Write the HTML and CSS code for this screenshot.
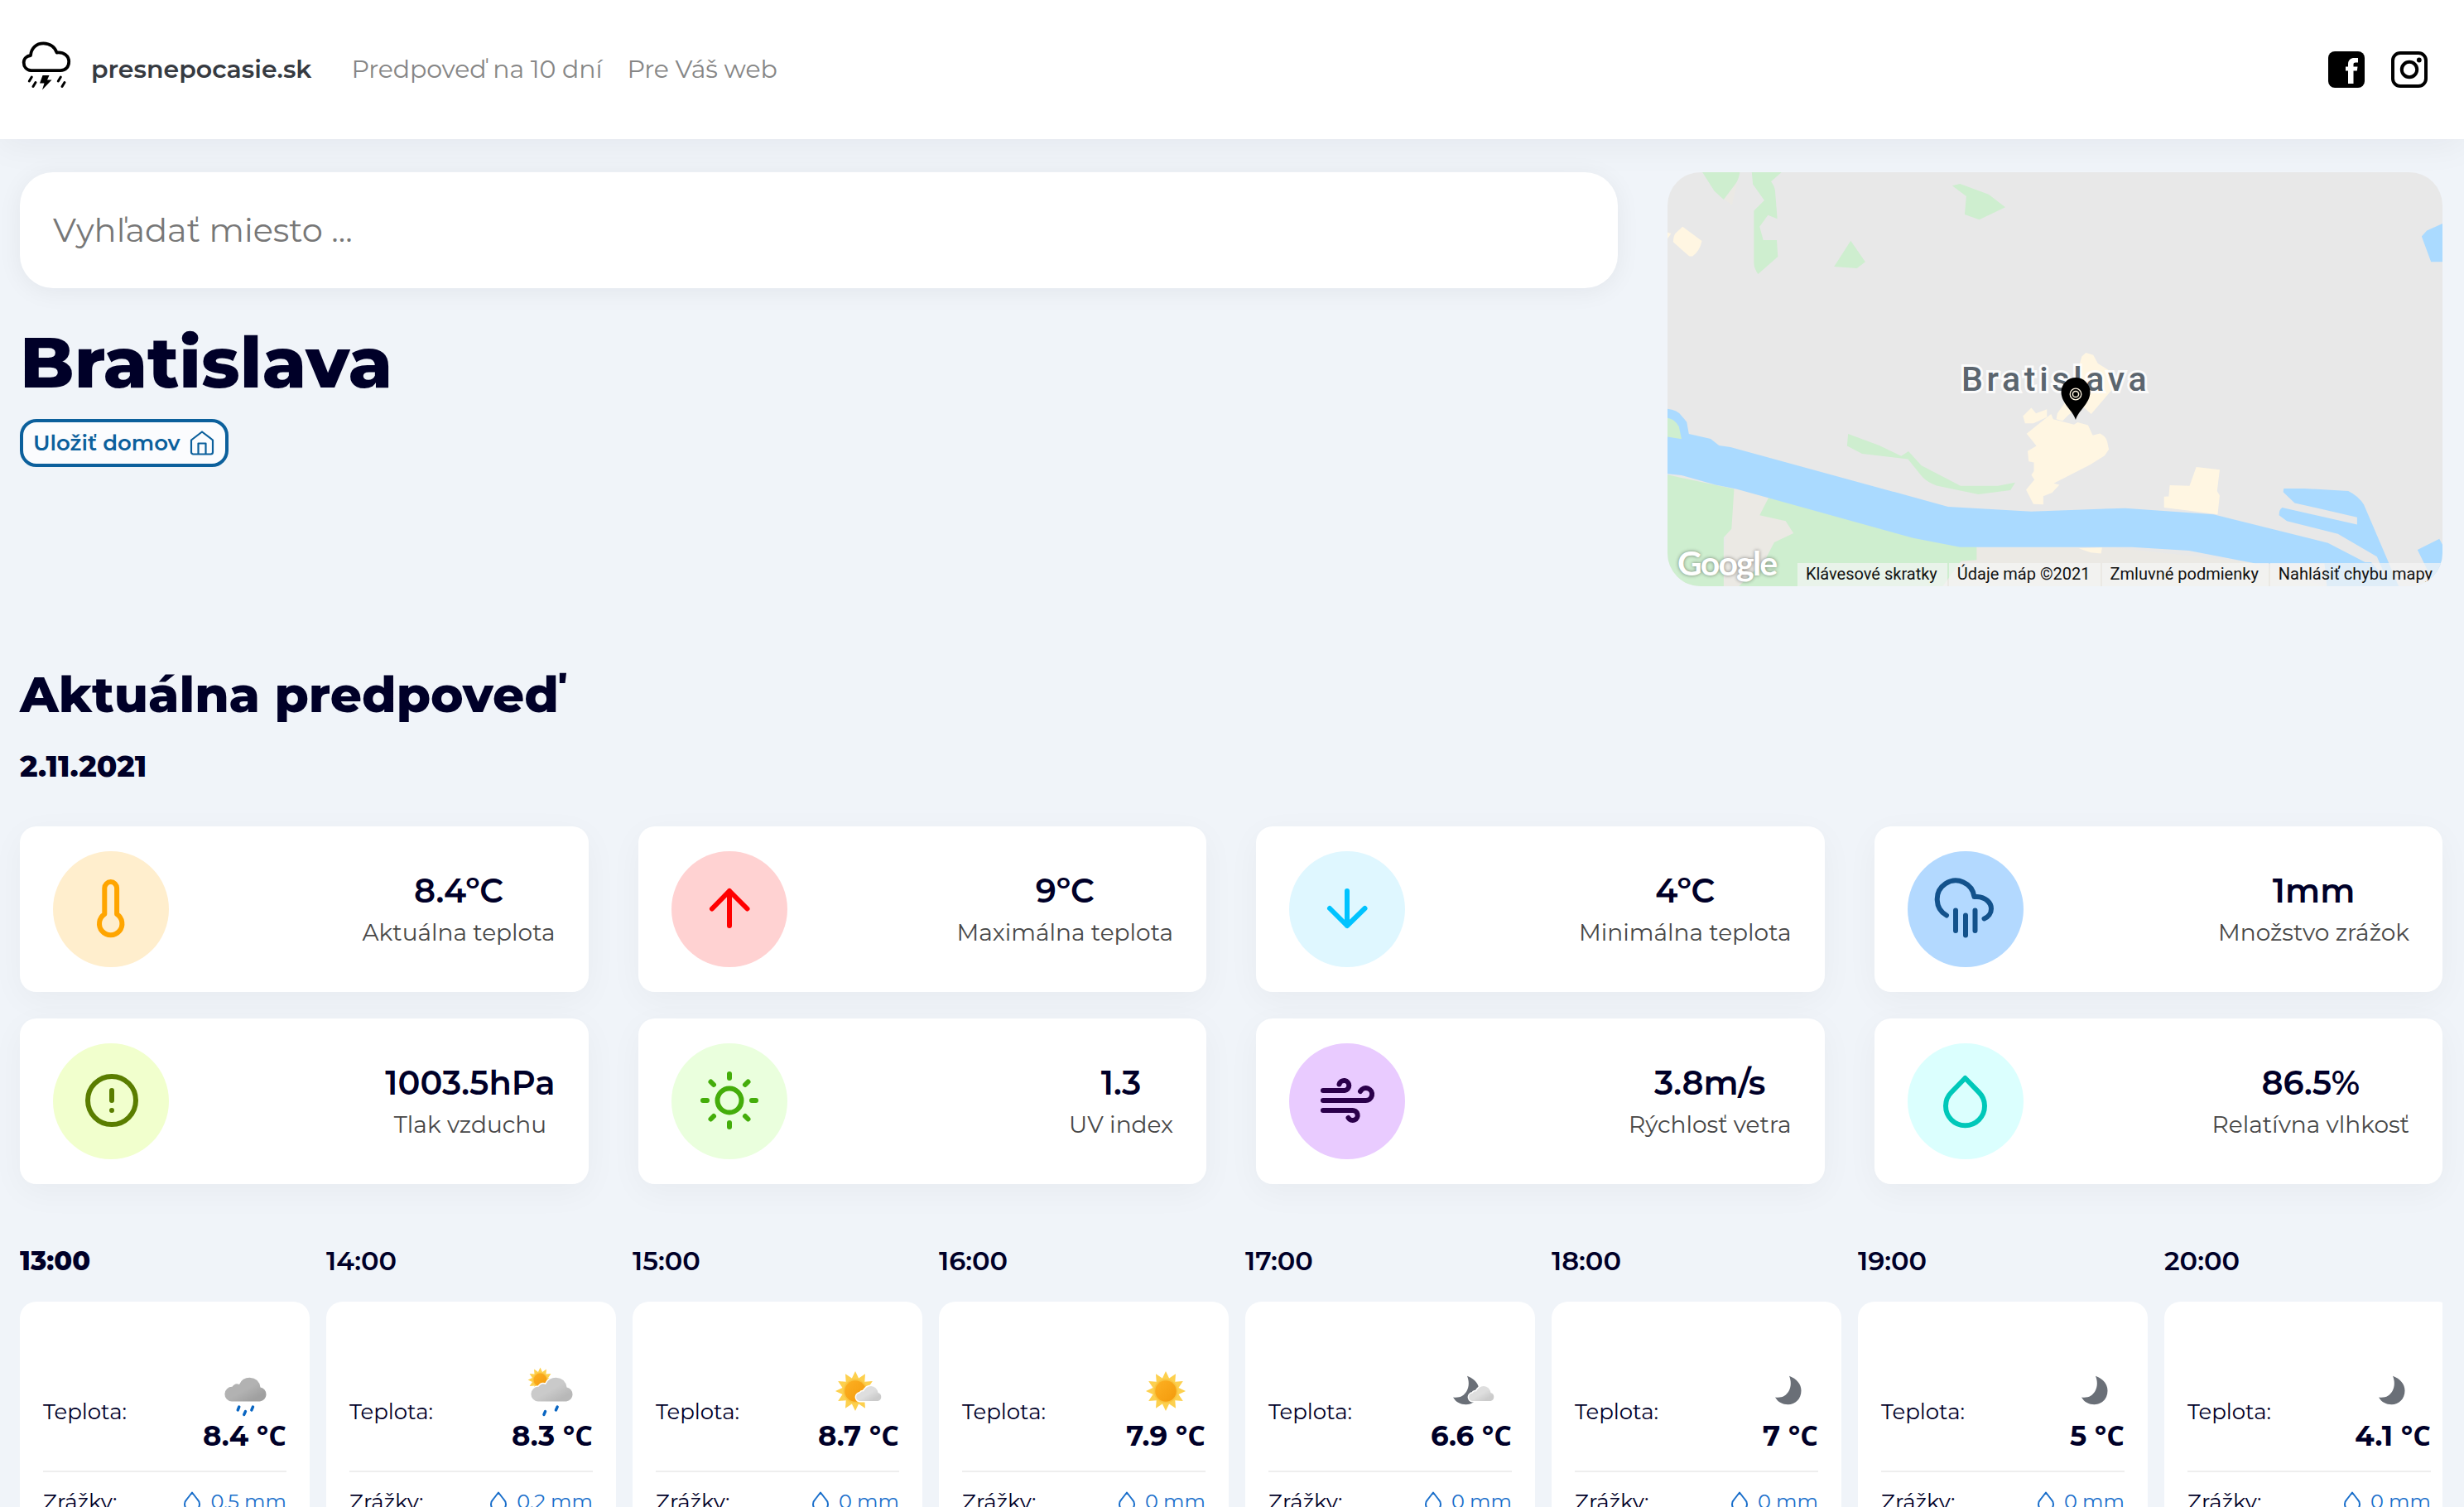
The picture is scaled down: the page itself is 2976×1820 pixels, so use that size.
FILE: index.html
```html
<!DOCTYPE html>
<html lang="sk">
<head>
<meta charset="utf-8">
<title>presnepocasie.sk</title>
<link rel="stylesheet" href="styles.css">
</head>
<body>
<svg class="defs" width="0" height="0" aria-hidden="true">
  <defs>
    <linearGradient id="g-dark" x1="0" y1="0" x2="1" y2="1"><stop offset=".5" stop-color="#b2b2b2"/><stop offset=".8" stop-color="#a0a0a0"/></linearGradient>
    <linearGradient id="g-mid" x1="0" y1="0" x2="1" y2="1"><stop offset=".5" stop-color="#cacaca"/><stop offset=".8" stop-color="#b8b8b8"/></linearGradient>
    <linearGradient id="g-light" x1="0" y1="0" x2="1" y2="1"><stop offset=".5" stop-color="#dedede"/><stop offset=".8" stop-color="#cbcbcb"/></linearGradient>
    <linearGradient id="g-sun" x1="0" y1="0" x2="1" y2="1"><stop offset="0" stop-color="#fdb022"/><stop offset="1" stop-color="#f39a0c"/></linearGradient>
    <path id="cloud" d="M20 52.500A8.800 8.800 0 0 1 20.500 34.800Q24 29.500 29 32Q32.500 23.800 41.500 23.800Q53 24.500 54.500 35.500A8.600 8.600 0 0 1 54 52.500Z"/>
    <path id="small-cloud" d="M38 52A4.800 4.800 0 0 1 38.500 42.500Q40.500 39.500 43 40.500Q46 34 52 34Q59 34.500 60.500 42A5.200 5.200 0 0 1 60.500 52Z"/>
    <path id="moon" d="M51 21.700C60 25 65.500 31.500 65.500 39.500C65.500 49.500 58.500 56.200 49.500 56.200C43 56.200 37.500 53.500 34 47.500C42 48.500 47 46 50.500 40C53.500 34.500 53.500 28 51 21.700Z"/>
    <g id="sun">
      <path fill="#fdd04e" d="M0-24L4.100-15.500L12-20.800L11.300-11.300L20.800-12L15.500-4.100L24 0L15.500 4.100L20.800 12L11.300 11.300L12 20.800L4.100 15.500L0 24L-4.100 15.500L-12 20.800L-11.300 11.300L-20.800 12L-15.500 4.100L-24 0L-15.500-4.100L-20.800-12L-11.300-11.300L-12-20.800L-4.100-15.500Z"/>
      <circle r="14.500" fill="#f9c440"/><circle r="12.800" fill="url(#g-sun)"/>
    </g>
    <path id="drop" d="M12 2.500L5.800 10.500A9 9 0 0 0 3 16.500a9 9 0 0 0 18 0A9 9 0 0 0 18.200 10.500Z"/>
    <symbol id="w-rain" viewBox="0 0 80 74"><use href="#cloud" fill="url(#g-dark)"/><path class="rain" d="M28.800 59l-1.600 4M36.500 64.500l-1.800 4M45.500 59l-1.700 4"/></symbol>
    <symbol id="w-sunrain" viewBox="0 0 80 74"><use href="#sun" transform="translate(22.500 26.500) scale(.62)"/><use href="#cloud" fill="url(#g-mid)" class="rim"/><path class="rain" d="M28.600 64.500l-1.700 4M43.200 59l-1.800 4"/></symbol>
    <symbol id="w-suncloud" viewBox="0 0 80 74"><use href="#sun" transform="translate(33 40)"/><use href="#small-cloud" fill="url(#g-light)" class="rim"/></symbol>
    <symbol id="w-sun" viewBox="0 0 80 74"><use href="#sun" transform="translate(38 40)"/></symbol>
    <symbol id="w-mooncloud" viewBox="0 0 80 74"><use href="#moon" x="-19" fill="#6a6f77"/><use href="#small-cloud" fill="url(#g-light)" class="rim"/></symbol>
    <symbol id="w-moon" viewBox="0 0 80 74"><use href="#moon" fill="#6a6f77"/></symbol>
  </defs>
</svg>

<header class="header">
  <a class="brand">
    <svg class="brand-logo" viewBox="0 0 80 80">
      <path d="M17.500 45.200C11.500 44.500 8.700 40 8.700 35.500C8.700 30.500 12.500 27.500 17 27C17.500 18 24 12.300 32.500 12.300C40.500 12.300 46.500 17 48.500 23.500C57 22.500 63.200 27.500 63.200 34.500C63.200 40.500 59.500 45.200 53 45.200Z" fill="none" stroke="#000" stroke-width="3.800" stroke-linejoin="round"/>
      <path d="M18.300 53l-3 5M23 59.500l-3 5M53.300 53l-3 5M58 59.500l-3 5" fill="none" stroke="#000" stroke-width="3" stroke-linecap="round"/>
      <path d="M31.500 51h8l-2.500 5.500h5.500L31 68.500l2.500-8h-5.500z" fill="#000"/>
    </svg>
    <span>presnepocasie.sk</span>
  </a>
  <nav class="nav"><a>Predpoveď na 10 dní</a><a>Pre Váš web</a></nav>
  <div class="social">
    <svg viewBox="0 0 44 44"><rect width="44" height="44" rx="8" fill="#000"/><path d="M24 39V23.500h-3V18.500h3V15.500C24 10.500 27 8 31.500 8H36v5.500h-3c-1.700 0-2.500.7-2.500 2.300v2.700H35.500l-.7 5h-4.300V39z" fill="#fff"/></svg>
    <svg viewBox="0 0 44 44"><rect x="2" y="2" width="40" height="40" rx="9" fill="none" stroke="#000" stroke-width="4"/><circle cx="22" cy="22" r="9.200" fill="none" stroke="#000" stroke-width="4"/><circle cx="33.800" cy="10.500" r="2.900"/></svg>
  </div>
</header>

<main class="page">
  <section class="top">
    <div class="place">
      <div class="search">Vyhľadať miesto ...</div>
      <h1>Bratislava</h1>
      <button class="home-btn">Uložiť domov
        <svg viewBox="0 0 32 32"><path d="M3 12.500L16 2.500l13 10V27a2.500 2.500 0 0 1-2.500 2.500h-21A2.500 2.500 0 0 1 3 27z M11.500 29V16.500h9V29"/></svg>
      </button>
    </div>
    <div class="map">
      <svg class="map-canvas" viewBox="38 52 1489 1452" preserveAspectRatio="none">
        <path fill="#ebe9e4" d="M160 1160L235 1190L640 1370L900 1370L1160 1420L1300 1504H140Z M147 147l25-60-10 80z"/>
        <path fill="#ceeecf" d="M105 52h72q-2 25-8 40l-23 56-18-30zM200 52h57l-20 33q8 20 8 38l4 92-18-13-16 41 7 47h26l2 58-38 61q-8-20-8-40V187l20-36-22-57zM585 99l15-6 55 37 32 45-50 43-28-18 3-64zM390 292l28 74-16 23-44-6zM385 970l60 40 42 37 14-16 25 50 75 71h72l33-12-9 27-62 15-80-31q-18-12-28-32l-27-61-88-19-29-27zM38 1113l128 50-5 140-15 30V1504H38zM232 1194l400 172v46l-30 4-35 88H175l50-90 18-64 37-32-15-43-50-20z"/>
        <path fill="#aadaff" d="M38 882q18 4 26 22l11 24 4 42 42 17 16 23 22 6 418 209 160 17 180-12 170 22 220 100 76 72H1168l-128-45-110-12H600l-90-32-340-172-40-15-65-33-27-5zM1487 277l10-20 30-25v134h-22zM1222 1161h40l84 9q20 18 30 48l67 286h-17l-25-104-75-80-98-45-15-20q0-20 6-27l144 60v-26l-120-50-22-38zM1300 1420h90l40 84h-125z M1479 1376l42-38 6 20v140l-18-10z"/>
        <path fill="#ceeecf" d="M38 914q14 4 22 30l5 44-27-8z"/>
        <path fill="#fff6e2" d="M67 243l37 50q-4 35-18 54h-6l-31-50q0-20 4-30zM38 263l7 4-7 18zM842 685l14 8 9 30 20 22 7 70-40 85-18-30-25 32-12 22-12-6 2-20 27-70 20-130zM721 907l16-29 9 20 21-15v28l-26 22h-16zM775 900l4 18 40 19 7-8 20 10 9 36 14-7q12 12 14 30l3 26-8 22-28 32-70 65 11 5-14 28-17 12v29l-19-1-14-50 16-36-6-16 5-14v-30l-10-4-2-36 17-18-19-43zM1054 1086l45 9-5 75 5 16-4 66-57-14-46-10v-38l9-1 2-39 38 2zM828 1371l45-3-2 21-20-3z"/>
      </svg>
      <span class="map-label">Bratislava</span>
      <svg class="map-pin" viewBox="0 0 36 52"><path d="M18 51C15 40 .5 31 .5 17.500A17.500 17.500 0 0 1 35.500 17.500C35.500 31 21 40 18 51Z"/><circle cx="18" cy="20" r="6.800" fill="none" stroke="#fff6e2" stroke-width="1.300"/><circle cx="18" cy="20" r="3.600" fill="none" stroke="#fff6e2" stroke-width="1.500"/></svg>
      <span class="map-google">Google</span>
      <div class="map-legal"><span>Klávesové skratky</span><span>Údaje máp ©2021</span><span>Zmluvné podmienky</span><span>Nahlásiť chybu mapy</span></div>
    </div>
  </section>

  <h2>Aktuálna predpoveď</h2>
  <p class="date">2.11.2021</p>

  <section class="stats">
    <article class="stat"><div class="dot temp"><svg viewBox="0 0 80 80"><path d="M32.300 46V14.500a7.400 7.400 0 0 1 14.800 0V46a13.700 13.700 0 1 1-14.800 0z"/></svg></div><div class="figure"><strong>8.4ºC</strong><span>Aktuálna teplota</span></div></article>
    <article class="stat"><div class="dot max"><svg viewBox="0 0 80 80"><path d="M40 60V18M19 39.500L40 18l21.500 21.500"/></svg></div><div class="figure"><strong>9ºC</strong><span>Maximálna teplota</span></div></article>
    <article class="stat"><div class="dot min"><svg viewBox="0 0 80 80"><path d="M40 18V60M19 39L40 60l21.500-21"/></svg></div><div class="figure"><strong>4ºC</strong><span>Minimálna teplota</span></div></article>
    <article class="stat"><div class="dot fall"><svg viewBox="0 0 80 80"><path d="M17 47.500A22.500 22.500 0 1 1 50.500 25H54C64 25.500 71 32 71 39.500C71 45 67.500 49.500 62.500 51.500M28 41.500V66M40 47.500V71.500M51.500 41.500V66"/></svg></div><div class="figure"><strong>1mm</strong><span>Množstvo zrážok</span></div></article>
    <article class="stat"><div class="dot press"><svg viewBox="0 0 80 80"><circle cx="41" cy="39" r="29"/><path d="M41 27V39M41 51v.1"/></svg></div><div class="figure"><strong>1003.5hPa</strong><span>Tlak vzduchu</span></div></article>
    <article class="stat"><div class="dot uv"><svg viewBox="0 0 80 80"><circle cx="40" cy="39" r="14.500"/><path d="M40 7V12M40 66V71M8 39h5M67 39h5M17.500 16.500l3.500 3.500M59 58l3.500 3.500M62.500 16.500L59 20M21 58l-3.500 3.500"/></svg></div><div class="figure"><strong>1.3</strong><span>UV index</span></div></article>
    <article class="stat"><div class="dot wind"><svg viewBox="0 0 80 80"><path d="M11 27H37A6 6 0 1 0 30.500 19.500M11 39H62A7.500 7.500 0 1 0 56 28M11 51H46A6 6 0 1 1 41.500 60"/></svg></div><div class="figure"><strong>3.8m/s</strong><span>Rýchlosť vetra</span></div></article>
    <article class="stat"><div class="dot hum"><svg viewBox="0 0 80 80"><path d="M39.500 12L23 29A23.500 23.500 0 1 0 56 29Z"/></svg></div><div class="figure"><strong>86.5%</strong><span>Relatívna vlhkosť</span></div></article>
  </section>

  <section class="hours">
    <div class="hour now"><h3>13:00</h3><div class="hour-card"><div class="row"><span>Teplota:</span><div class="reading"><svg class="weather"><use href="#w-rain"/></svg><b>8.4 <i>°C</i></b></div></div><div class="row rainfall"><span>Zrážky:</span><em><svg viewBox="0 0 24 28"><use href="#drop"/></svg>0.5 mm</em></div></div></div>
    <div class="hour"><h3>14:00</h3><div class="hour-card"><div class="row"><span>Teplota:</span><div class="reading"><svg class="weather"><use href="#w-sunrain"/></svg><b>8.3 <i>°C</i></b></div></div><div class="row rainfall"><span>Zrážky:</span><em><svg viewBox="0 0 24 28"><use href="#drop"/></svg>0.2 mm</em></div></div></div>
    <div class="hour"><h3>15:00</h3><div class="hour-card"><div class="row"><span>Teplota:</span><div class="reading"><svg class="weather"><use href="#w-suncloud"/></svg><b>8.7 <i>°C</i></b></div></div><div class="row rainfall"><span>Zrážky:</span><em><svg viewBox="0 0 24 28"><use href="#drop"/></svg>0 mm</em></div></div></div>
    <div class="hour"><h3>16:00</h3><div class="hour-card"><div class="row"><span>Teplota:</span><div class="reading"><svg class="weather"><use href="#w-sun"/></svg><b>7.9 <i>°C</i></b></div></div><div class="row rainfall"><span>Zrážky:</span><em><svg viewBox="0 0 24 28"><use href="#drop"/></svg>0 mm</em></div></div></div>
    <div class="hour"><h3>17:00</h3><div class="hour-card"><div class="row"><span>Teplota:</span><div class="reading"><svg class="weather"><use href="#w-mooncloud"/></svg><b>6.6 <i>°C</i></b></div></div><div class="row rainfall"><span>Zrážky:</span><em><svg viewBox="0 0 24 28"><use href="#drop"/></svg>0 mm</em></div></div></div>
    <div class="hour"><h3>18:00</h3><div class="hour-card"><div class="row"><span>Teplota:</span><div class="reading"><svg class="weather"><use href="#w-moon"/></svg><b>7 <i>°C</i></b></div></div><div class="row rainfall"><span>Zrážky:</span><em><svg viewBox="0 0 24 28"><use href="#drop"/></svg>0 mm</em></div></div></div>
    <div class="hour"><h3>19:00</h3><div class="hour-card"><div class="row"><span>Teplota:</span><div class="reading"><svg class="weather"><use href="#w-moon"/></svg><b>5 <i>°C</i></b></div></div><div class="row rainfall"><span>Zrážky:</span><em><svg viewBox="0 0 24 28"><use href="#drop"/></svg>0 mm</em></div></div></div>
    <div class="hour last"><h3>20:00</h3><div class="hour-card"><div class="row"><span>Teplota:</span><div class="reading"><svg class="weather"><use href="#w-moon"/></svg><b>4.1 <i>°C</i></b></div></div><div class="row rainfall"><span>Zrážky:</span><em><svg viewBox="0 0 24 28"><use href="#drop"/></svg>0 mm</em></div></div></div>
  </section>
</main>
</body>
</html>
```
FILE: styles.css
```css
* { box-sizing: border-box; margin: 0; padding: 0; }
html, body { height: 1820px; overflow: hidden; }
body { background: #f0f4f9; color: #000028; font-family: Montserrat, "Open Sans", sans-serif; }
svg { display: block; flex: none; }
.defs { position: absolute; }

/* Header */
.header { position: relative; display: flex; align-items: center; height: 168px; padding: 0 44px 0 20px; background: #fff; box-shadow: 0 8px 40px rgba(0, 20, 30, .05); font-size: 30px; line-height: 40px; }
.brand { display: flex; align-items: center; gap: 10px; color: #363a41; font-weight: 600; }
.brand-logo { width: 80px; height: 80px; margin-top: -8px; }
.nav { display: flex; gap: 30px; margin-left: 48px; color: #868686; letter-spacing: -.1px; }
.social { display: flex; gap: 32px; margin-left: auto; }
.social svg { width: 44px; height: 44px; }

/* Search, place and map */
.page { padding: 40px 26px 0 24px; }
.top { display: flex; justify-content: space-between; height: 500px; }
.place { width: 1930px; }
.search { height: 140px; padding: 0 40px; border-radius: 40px; background: #fff; box-shadow: 0 4px 30px rgba(0, 0, 30, .06); color: #777; font-size: 40px; line-height: 140px; }
h1 { margin-top: 39px; font-size: 85.4px; font-weight: 800; line-height: 101px; }
.home-btn { display: flex; align-items: center; gap: 10px; height: 58px; margin-top: 18px; padding: 0 12px; border: 4px solid #0c609c; border-radius: 20px; background: #fbfcfe; color: #0c609c; font: 600 26px/40px Montserrat, "Open Sans", sans-serif; }
.home-btn svg { width: 32px; height: 32px; fill: none; stroke: currentColor; stroke-width: 2.2; stroke-linejoin: round; }
.map { position: relative; width: 936px; height: 500px; overflow: hidden; border-radius: 40px; background: #e8e8e8; }
.map-canvas { width: 100%; height: 100%; }
.map-label { position: absolute; left: 355px; top: 226px; color: #5b656e; font: 500 41px/48px Roboto, sans-serif; letter-spacing: 4.7px; -webkit-text-stroke: 6px rgba(255, 255, 255, .85); paint-order: stroke fill; }
.map-pin { position: absolute; left: 475px; top: 248px; width: 36px; height: 52px; }
.map-google { position: absolute; left: 12px; top: 448px; color: #fff; font: 700 41px/48px Lato, sans-serif; letter-spacing: -1.8px; text-shadow: 0 0 4px rgba(0, 0, 0, .45); }
.map-legal { position: absolute; right: 0; bottom: 0; display: flex; gap: 2px; height: 28px; color: #111; font: 20px/27px Roboto, sans-serif; }
.map-legal span { padding: 0 12px 0 10px; background: rgba(245, 245, 245, .7); }

/* Current conditions */
h2 { margin-top: 94px; font-size: 59.6px; font-weight: 800; line-height: 73px; }
.date { margin-top: 28px; font-size: 36px; font-weight: 800; line-height: 44px; }
.stats { display: grid; grid-template-columns: repeat(4, 1fr); gap: 32px 60px; margin-top: 51px; }
.stat { display: flex; align-items: center; justify-content: space-between; height: 200px; padding: 0 40px; border-radius: 20px; background: #fff; box-shadow: 0 10px 40px rgba(0, 20, 30, .04); }
.dot { display: grid; place-items: center; width: 140px; height: 140px; border-radius: 50%; }
.dot svg { width: 80px; height: 80px; fill: none; stroke: currentColor; stroke-width: 6; stroke-linecap: round; stroke-linejoin: round; }
.temp { background: #ffeecd; color: #ffa500; }
.max { background: #ffd2d2; color: #f00; }
.min { background: #dff7ff; color: #00c3ff; }
.fall { background: #b3d9ff; color: #13528c; }
.press { background: #f1ffcd; color: #5a7d00; }
.uv { background: #eaffdd; color: #44ad0a; }
.wind { background: #e9cbff; color: #2b004b; }
.hum { background: #dbfffe; color: #00c8b9; }
.figure { display: flex; flex-direction: column; align-items: center; gap: 8px; }
.figure strong { font-size: 40px; font-weight: 600; line-height: 48px; }
.figure span { color: #484848; font-size: 28px; line-height: 36px; }

/* Hourly forecast */
.hours { display: flex; gap: 20px; margin-top: 73px; overflow: hidden; }
.hour { flex: 0 0 350px; }
.hour h3 { font-size: 32px; font-weight: 600; line-height: 40px; }
.now h3 { font-weight: 800; }
.hour-card { height: 248px; margin-top: 29px; padding: 68px 28px 0; overflow: hidden; border-radius: 20px 20px 0 0; background: #fff; }
.row { display: flex; align-items: center; justify-content: space-between; font-size: 26px; line-height: 32px; }
.reading { display: flex; flex-direction: column; align-items: flex-end; height: 130px; }
.weather { width: 80px; height: 74px; margin-right: 6px; }
.last .weather { margin-right: 17px; }
.reading b { font-size: 34px; font-weight: 700; line-height: 40px; }
.reading i { font: 700 34px/1 "Open Sans", sans-serif; }
.rim { stroke: #fff; stroke-width: 3; paint-order: stroke; }
.rain { fill: none; stroke: #0a66c2; stroke-width: 3.4; stroke-linecap: round; }
.rainfall { margin-top: 6px; padding-top: 20px; border-top: 2px solid #eee; }
.rainfall em { display: flex; align-items: center; gap: 10px; color: #1a6fcb; font-size: 24px; font-style: normal; }
.rainfall svg { width: 24px; height: 28px; fill: none; stroke: currentColor; stroke-width: 2; stroke-linejoin: round; }
```
